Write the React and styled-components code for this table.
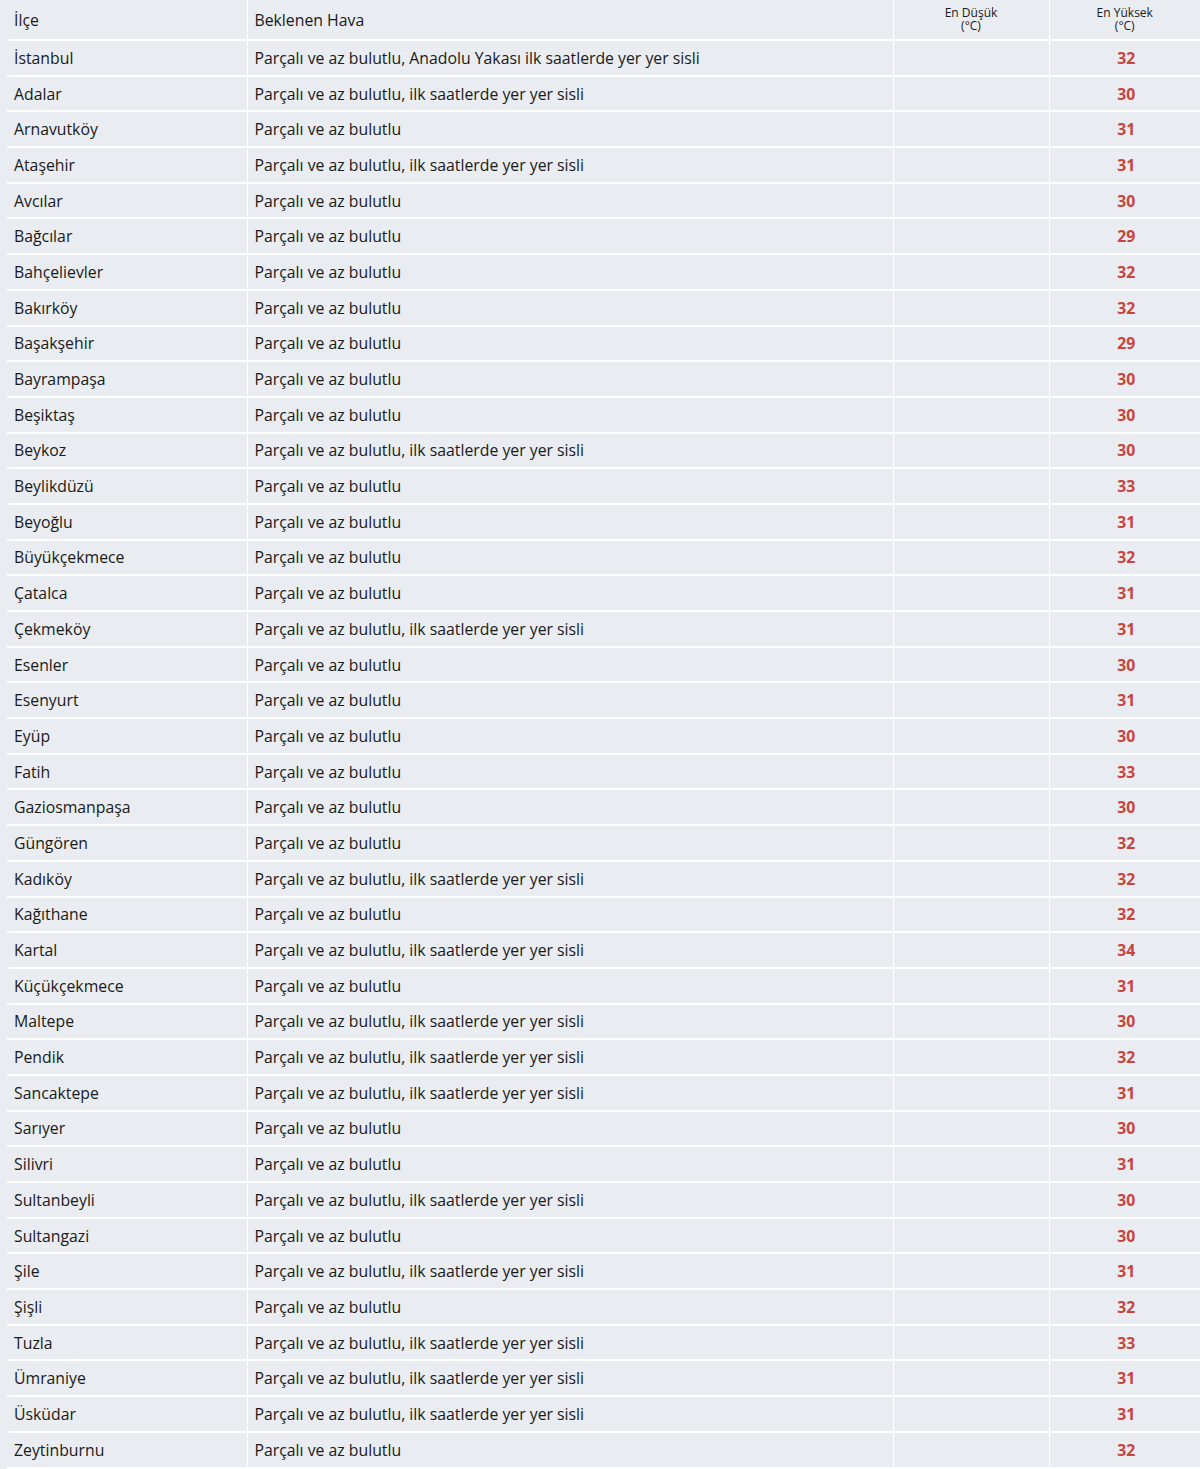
import React from 'react';
import styled, { createGlobalStyle } from 'styled-components';

const GlobalStyle = createGlobalStyle`
  html, body {
    margin: 0;
    padding: 0;
    background: #e9ecf0;
  }
  body {
    font-family: "Open Sans", "Noto Sans", sans-serif;
    color: #1a1a1a;
  }
`;

const A = 'Parçalı ve az bulutlu';
const B = 'Parçalı ve az bulutlu, ilk saatlerde yer yer sisli';

const rows = [
  ['İstanbul', 'Parçalı ve az bulutlu, Anadolu Yakası ilk saatlerde yer yer sisli', 32],
  ['Adalar', B, 30],
  ['Arnavutköy', A, 31],
  ['Ataşehir', B, 31],
  ['Avcılar', A, 30],
  ['Bağcılar', A, 29],
  ['Bahçelievler', A, 32],
  ['Bakırköy', A, 32],
  ['Başakşehir', A, 29],
  ['Bayrampaşa', A, 30],
  ['Beşiktaş', A, 30],
  ['Beykoz', B, 30],
  ['Beylikdüzü', A, 33],
  ['Beyoğlu', A, 31],
  ['Büyükçekmece', A, 32],
  ['Çatalca', A, 31],
  ['Çekmeköy', B, 31],
  ['Esenler', A, 30],
  ['Esenyurt', A, 31],
  ['Eyüp', A, 30],
  ['Fatih', A, 33],
  ['Gaziosmanpaşa', A, 30],
  ['Güngören', A, 32],
  ['Kadıköy', B, 32],
  ['Kağıthane', A, 32],
  ['Kartal', B, 34],
  ['Küçükçekmece', A, 31],
  ['Maltepe', B, 30],
  ['Pendik', B, 32],
  ['Sancaktepe', B, 31],
  ['Sarıyer', A, 30],
  ['Silivri', A, 31],
  ['Sultanbeyli', B, 30],
  ['Sultangazi', A, 30],
  ['Şile', B, 31],
  ['Şişli', A, 32],
  ['Tuzla', B, 33],
  ['Ümraniye', B, 31],
  ['Üsküdar', B, 31],
  ['Zeytinburnu', A, 32],
];

const Wrap = styled.div`
  padding-left: 7px;
`;

const Table = styled.table`
  width: 1193px;
  border-collapse: collapse;
  table-layout: fixed;
`;

const HeadRow = styled.tr`
  height: 40px;
`;

const HeadCell = styled.th`
  padding: 0 7px;
  font-weight: 400;
  font-size: 15.8px;
  line-height: 20px;
  text-align: left;
  vertical-align: middle;
  border-bottom: 2px solid #fff;
  border-left: 1px solid #fff;
  &:first-child {
    border-left: none;
  }
`;

const UnitHead = styled(HeadCell)`
  font-size: 12px;
  line-height: 13px;
  text-align: center;
  vertical-align: top;
  padding-top: 6px;
`;

const Cell = styled.td`
  height: 33.7px;
  padding: 0 7px;
  font-size: 15.8px;
  line-height: 20px;
  text-align: left;
  border-bottom: 2px solid #fff;
  border-left: 1px solid #fff;
  &:first-child {
    border-left: none;
  }
`;

const Max = styled(Cell)`
  padding-left: 10px;
  text-align: center;
  color: #c8443f;
  font-weight: 700;
`;

export default function App() {
  return (
    <Wrap>
      <GlobalStyle />
      <Table>
        <colgroup>
          <col style={{ width: 240 }} />
          <col style={{ width: 646 }} />
          <col style={{ width: 156 }} />
          <col style={{ width: 151 }} />
        </colgroup>
        <thead>
          <HeadRow>
            <HeadCell>İlçe</HeadCell>
            <HeadCell>Beklenen Hava</HeadCell>
            <UnitHead>En Düşük<br />(°C)</UnitHead>
            <UnitHead>En Yüksek<br />(°C)</UnitHead>
          </HeadRow>
        </thead>
        <tbody>
          {rows.map(([name, desc, max]) => (
            <tr key={name}>
              <Cell>{name}</Cell>
              <Cell>{desc}</Cell>
              <Cell />
              <Max>{max}</Max>
            </tr>
          ))}
        </tbody>
      </Table>
    </Wrap>
  );
}
